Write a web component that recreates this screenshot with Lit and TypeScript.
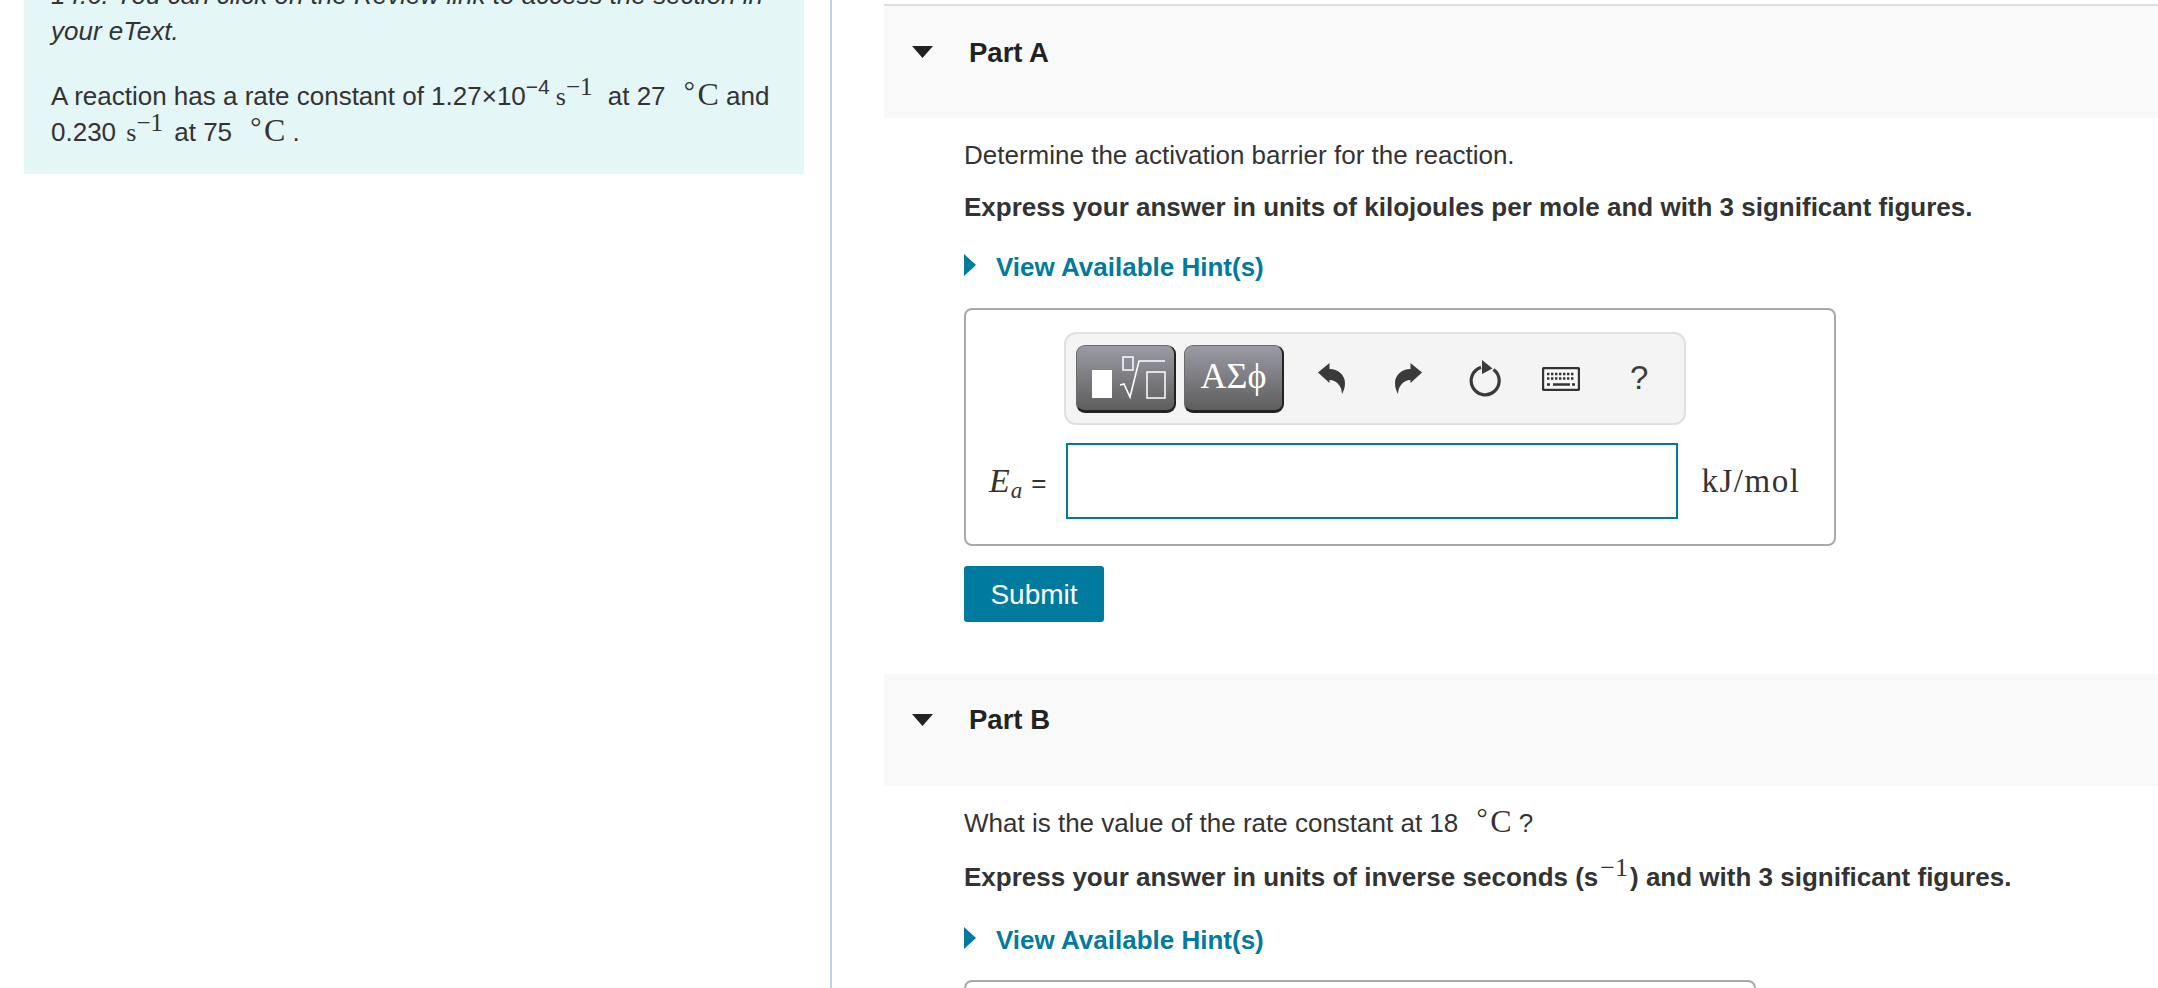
import { LitElement, html, css } from "lit";
import { customElement } from "lit/decorators.js";

const deg = html`<span class="math deg"><span class="degmark">°</span>C</span>`;

@customElement("app-root")
export class AppRoot extends LitElement {
  static styles = css`
    :host { display: block; height: 988px; overflow: hidden; font-family: "Liberation Sans", Arial, sans-serif; color: #333; font-size: 26px; background: #fff; }
    .page { display: flex; height: 988px; }
    .left { width: 832px; flex: none; border-right: 2px solid #c2d0e2; padding-left: 24px; box-sizing: border-box; }
    .intro { width: 780px; box-sizing: border-box; margin-top: -40px; padding: 17px 20px 24px 27px; background: #e4f6f6; line-height: 36px; }
    .intro p { margin: 0; }
    .intro p + p { margin-top: 29px; }
    .right { flex: 1; min-width: 0; padding-left: 52px; padding-top: 4px; }
    .head { display: flex; height: 112px; background: #f9f9f9; box-sizing: border-box; align-items: flex-start; padding: 0 0 0 28px; }
    .first { border-top: 2px solid #dcdee2; height: 114px; }
    .tri { width: 21px; height: 12px; flex: none; margin-top: 40px; }
    .head b { font-size: 27.5px; color: #222; margin-left: 36px; line-height: 32px; margin-top: 30px; }
    .first b { margin-top: 31px; }
    .body { padding-left: 80px; }
    p.q { margin: 0; line-height: 36px; }
    .q1 { padding-top: 19px; }
    p.b { margin: 16px 0 0; line-height: 36px; font-weight: 700; }
    p.b2 { margin-top: 18px; }
    .hint { display: flex; align-items: center; margin-top: 24px; color: #007b9f; font-weight: 700; font-size: 26px; line-height: 36px; height: 36px; }
    .hint2 { margin-top: 27px; }
    .hint svg { width: 12px; height: 22px; margin-right: 20px; flex: none; position: relative; top: -2px; }
    .math { font-family: "Liberation Serif", "Times New Roman", serif; line-height: 0; }
    .deg { margin-left: 11px; font-size: 32px; }
    .degmark { position: relative; top: -5px; font-size: 28px; margin-right: 2.5px; }
    .s { font-size: 26px; margin-left: 6px; }
    .s2 { margin-left: 3px; }
    .up { font-size: 25px; vertical-align: 10px; line-height: 0; margin-right: 8px; }
    .up2 { margin-right: 4px; }
    .up3 { font-weight: 400; font-size: 26px; margin: 0 2px; }
    .up4 { font-size: 21px; vertical-align: 11px; line-height: 0; }
    .box { margin-top: 23px; width: 872px; height: 238px; box-sizing: border-box; border: 2px solid #a9a9a9; border-radius: 8px; padding: 22px 0 0 98px; }
    .tb { display: flex; align-items: center; width: 622px; height: 93px; box-sizing: border-box; border: 2px solid #e0e0e0; border-radius: 12px; background: #f4f4f4; padding-left: 10px; }
    .btn { width: 100px; height: 68px; box-sizing: border-box; border-radius: 9px; border: 1px solid #6a6a6a; border-right: 2px solid #222; border-bottom: 3px solid #222; background: linear-gradient(#9a9aa4, #5e5e5e); display: flex; align-items: center; justify-content: center; flex: none; }
    .btn + .btn { margin-left: 8px; }
    .btn svg { width: 100px; height: 68px; flex: none; position: relative; top: 1px; }
    .greek { font-family: "Liberation Serif", serif; font-size: 36px; color: #fff; position: relative; top: -2px; }
    .ic { flex: none; display: block; }
    .sp1 { width: 34px; flex: none; } .sp2 { width: 50px; flex: none; } .sp3 { width: 47px; flex: none; } .sp4 { width: 41px; flex: none; }
    .q-mark { font-size: 33px; color: #3a3a3a; margin-left: 50px; line-height: 30px; position: relative; top: -1px; }
    .row { display: flex; align-items: center; margin-top: 18px; margin-left: -96px; }
    .lbl { width: 97.5px; flex: none; display: flex; align-items: baseline; padding-left: 21px; box-sizing: border-box; font-size: 26px; }
    .lbl i { font-family: "Liberation Serif", serif; font-size: 34px; }
    .lbl sub { font-family: "Liberation Serif", serif; font-style: italic; font-size: 23px; line-height: 0; position: relative; top: 6px; vertical-align: baseline; margin-left: 1px; }
    .lbl span { margin-left: 9px; }
    .field { width: 612px; height: 76px; box-sizing: border-box; border: 2px solid #007b9f; background: #fff; flex: none; }
    .unit { font-family: "Liberation Serif", serif; font-size: 33px; letter-spacing: 1.5px; margin-left: 24px; white-space: nowrap; }
    .submit { display: flex; align-items: center; justify-content: center; margin-top: 20px; width: 140px; height: 56px; padding-top: 2px; box-sizing: border-box; background: #007b9f; color: #fff; border-radius: 3px; font-size: 28px; }
    .partb { margin-top: 52px; }
    .q2 { padding-top: 19px; }
    .box2 { width: 792px; margin-top: 22px; }
  `;

  private undo(flip = false) {
    return html`<svg class="ic" width="27" height="31" viewBox="0 0 27 31" style=${flip ? "transform:scaleX(-1)" : ""}><path fill="#3a3a3a" d="M0 9.5 11.5 0v6C20 6 27 12 27 20c0 5-1.5 8-3 11 0-7-5-14-12.5-14v3z"/></svg>`;
  }

  private tri() {
    return html`<svg class="tri" viewBox="0 0 21 12"><path fill="#222" d="M0 0h21L10.5 12z"/></svg>`;
  }

  private hint(cls = "") {
    return html`<div class="hint ${cls}"><svg viewBox="0 0 12 22"><path fill="#007b9f" d="M0 0l12 11L0 22z"/></svg>View Available Hint(s)</div>`;
  }

  render() {
    return html`<div class="page">
      <div class="left">
        <div class="intro">
          <p><i>14.6. You can click on the Review link to access the section in your eText.</i></p>
          <p>A reaction has a rate constant of 1.27×10<span class="up4">−4</span><span class="math"><span class="s">s</span><span class="up">−1</span></span> at 27 ${deg} and 0.230 <span class="math"><span class="s s2">s</span><span class="up up2">−1</span></span> at 75 ${deg} .</p>
        </div>
      </div>
      <div class="right">
        <div class="head first">${this.tri()}<b>Part A</b></div>
        <div class="body">
          <p class="q q1">Determine the activation barrier for the reaction.</p>
          <p class="b">Express your answer in units of kilojoules per mole and with 3 significant figures.</p>
          ${this.hint()}
          <div class="box">
            <div class="tb">
              <div class="btn"><svg viewBox="0 0 100 68" fill="none" stroke="#fff" stroke-width="1.5">
                <rect x="16" y="25" width="20" height="28" fill="#fff" stroke="none"/>
                <rect x="47" y="12" width="10" height="13"/>
                <path d="M44 40l4-1 6 13 9-36h26" stroke-width="1.6"/>
                <rect x="71" y="27" width="18" height="26"/>
              </svg></div>
              <div class="btn"><span class="greek">ΑΣϕ</span></div>
              <div class="sp1"></div>
              ${this.undo()}
              <div class="sp2"></div>
              ${this.undo(true)}
              <div class="sp3"></div>
              <svg class="ic" width="32" height="37" viewBox="0 0 32 37"><path fill="none" stroke="#3a3a3a" stroke-width="3.2" d="M12 7.4A14 14 0 1 0 24.5 9.5"/><path fill="#3a3a3a" d="M13 0l10.5 8.5L13 14z"/></svg>
              <div class="sp4"></div>
              <svg class="ic" width="38" height="24" viewBox="0 0 38 24"><rect x="1" y="1" width="36" height="22" rx="1.5" fill="#f8f8f8" stroke="#333" stroke-width="2.4"/><path stroke="#333" stroke-width="2.4" stroke-dasharray="2.4 1.6" d="M5 7h28M5 11.5h28"/><path stroke="#333" stroke-width="2.4" d="M5 17.5h3M11 17.5h17M30 17.5h3"/></svg>
              <span class="q-mark">?</span>
            </div>
            <div class="row">
              <div class="lbl"><i>E</i><sub>a</sub><span>=</span></div>
              <div class="field"></div>
              <div class="unit">kJ/mol</div>
            </div>
          </div>
          <div class="submit">Submit</div>
        </div>
        <div class="head partb">${this.tri()}<b>Part B</b></div>
        <div class="body">
          <p class="q q2">What is the value of the rate constant at 18 ${deg} ?</p>
          <p class="b b2">Express your answer in units of inverse seconds (s<span class="up up3 math">−1</span>) and with 3 significant figures.</p>
          ${this.hint("hint2")}
          <div class="box box2"></div>
        </div>
      </div>
    </div>`;
  }
}
